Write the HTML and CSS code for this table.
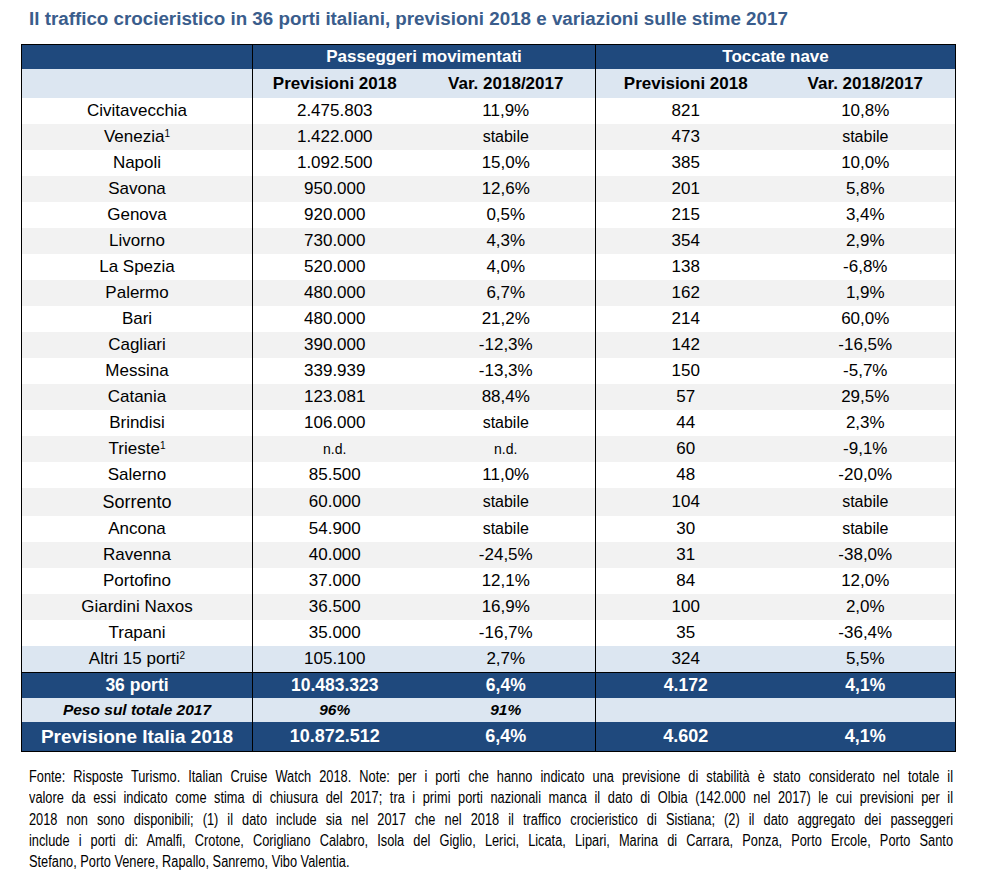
FILE: index.html
```html
<!DOCTYPE html>
<html lang="it">
<head>
<meta charset="utf-8">
<title>Traffico crocieristico</title>
<link rel="stylesheet" href="styles.css">
</head>
<body>
<div class="page">
  <h1 class="title">Il traffico crocieristico in 36 porti italiani, previsioni 2018 e variazioni sulle stime 2017</h1>
  <table class="tbl">
    <colgroup>
      <col class="c-port"><col class="c-p1"><col class="c-p2"><col class="c-t1"><col class="c-t2">
    </colgroup>
    <thead>
      <tr class="h1">
        <th></th>
        <th colspan="2" class="sep">Passeggeri movimentati</th>
        <th colspan="2" class="sep">Toccate nave</th>
      </tr>
      <tr class="h2">
        <th></th>
        <th class="sep">Previsioni 2018</th><th>Var. 2018/2017</th>
        <th class="sep">Previsioni 2018</th><th>Var. 2018/2017</th>
      </tr>
    </thead>
    <tbody>
      <tr><td>Civitavecchia</td><td class="sep">2.475.803</td><td>11,9%</td><td class="sep">821</td><td>10,8%</td></tr>
      <tr class="alt"><td>Venezia<sup>1</sup></td><td class="sep">1.422.000</td><td class="sm">stabile</td><td class="sep">473</td><td class="sm">stabile</td></tr>
      <tr><td>Napoli</td><td class="sep">1.092.500</td><td>15,0%</td><td class="sep">385</td><td>10,0%</td></tr>
      <tr class="alt"><td>Savona</td><td class="sep">950.000</td><td>12,6%</td><td class="sep">201</td><td>5,8%</td></tr>
      <tr><td>Genova</td><td class="sep">920.000</td><td>0,5%</td><td class="sep">215</td><td>3,4%</td></tr>
      <tr class="alt"><td>Livorno</td><td class="sep">730.000</td><td>4,3%</td><td class="sep">354</td><td>2,9%</td></tr>
      <tr><td>La Spezia</td><td class="sep">520.000</td><td>4,0%</td><td class="sep">138</td><td>-6,8%</td></tr>
      <tr class="alt"><td>Palermo</td><td class="sep">480.000</td><td>6,7%</td><td class="sep">162</td><td>1,9%</td></tr>
      <tr><td>Bari</td><td class="sep">480.000</td><td>21,2%</td><td class="sep">214</td><td>60,0%</td></tr>
      <tr class="alt"><td>Cagliari</td><td class="sep">390.000</td><td>-12,3%</td><td class="sep">142</td><td>-16,5%</td></tr>
      <tr><td>Messina</td><td class="sep">339.939</td><td>-13,3%</td><td class="sep">150</td><td>-5,7%</td></tr>
      <tr class="alt"><td>Catania</td><td class="sep">123.081</td><td>88,4%</td><td class="sep">57</td><td>29,5%</td></tr>
      <tr><td>Brindisi</td><td class="sep">106.000</td><td class="sm">stabile</td><td class="sep">44</td><td>2,3%</td></tr>
      <tr class="alt"><td>Trieste<sup>1</sup></td><td class="sep nd">n.d.</td><td class="nd">n.d.</td><td class="sep">60</td><td>-9,1%</td></tr>
      <tr><td>Salerno</td><td class="sep">85.500</td><td>11,0%</td><td class="sep">48</td><td>-20,0%</td></tr>
      <tr class="alt tall"><td class="big">Sorrento</td><td class="sep">60.000</td><td class="sm">stabile</td><td class="sep">104</td><td class="sm">stabile</td></tr>
      <tr class="tall2"><td>Ancona</td><td class="sep">54.900</td><td class="sm">stabile</td><td class="sep">30</td><td class="sm">stabile</td></tr>
      <tr class="alt"><td>Ravenna</td><td class="sep">40.000</td><td>-24,5%</td><td class="sep">31</td><td>-38,0%</td></tr>
      <tr><td>Portofino</td><td class="sep">37.000</td><td>12,1%</td><td class="sep">84</td><td>12,0%</td></tr>
      <tr class="alt"><td>Giardini Naxos</td><td class="sep">36.500</td><td>16,9%</td><td class="sep">100</td><td>2,0%</td></tr>
      <tr><td>Trapani</td><td class="sep">35.000</td><td>-16,7%</td><td class="sep">35</td><td>-36,4%</td></tr>
      <tr class="other"><td>Altri 15 porti<sup>2</sup></td><td class="sep">105.100</td><td>2,7%</td><td class="sep">324</td><td>5,5%</td></tr>
    </tbody>
    <tfoot>
      <tr class="tot"><td>36 porti</td><td class="sep">10.483.323</td><td>6,4%</td><td class="sep">4.172</td><td>4,1%</td></tr>
      <tr class="peso"><td>Peso sul totale 2017</td><td class="sep">96%</td><td>91%</td><td class="sep"></td><td></td></tr>
      <tr class="prev"><td class="lg">Previsione Italia 2018</td><td class="sep">10.872.512</td><td>6,4%</td><td class="sep">4.602</td><td>4,1%</td></tr>
    </tfoot>
  </table>
  <div class="note-wrap">
    <p class="note">
      <span class="ln">Fonte: Risposte Turismo. Italian Cruise Watch 2018. Note: per i porti che hanno indicato una previsione di stabilità è stato considerato nel totale il</span>
      <span class="ln">valore da essi indicato come stima di chiusura del 2017; tra i primi porti nazionali manca il dato di Olbia (142.000 nel 2017) le cui previsioni per il</span>
      <span class="ln">2018 non sono disponibili; (1) il dato include sia nel 2017 che nel 2018 il traffico crocieristico di Sistiana; (2) il dato aggregato dei passeggeri</span>
      <span class="ln">include i porti di: Amalfi, Crotone, Corigliano Calabro, Isola del Giglio, Lerici, Licata, Lipari, Marina di Carrara, Ponza, Porto Ercole, Porto Santo</span>
      <span class="ln last">Stefano, Porto Venere, Rapallo, Sanremo, Vibo Valentia.</span>
    </p>
  </div>
</div>
</body>
</html>
```
FILE: styles.css
```css
html, body {
  margin: 0;
  padding: 0;
  background: #ffffff;
}
body {
  font-family: "Liberation Sans", Arial, sans-serif;
  color: #000;
}
.page {
  width: 983px;
  padding: 7px 0 0 0;
  overflow: hidden;
}
.title {
  margin: 0 0 13px 29px;
  font-size: 18.8px;
  line-height: 24px;
  font-weight: bold;
  color: #3a5d8c;
}
.tbl {
  margin-left: 21px;
  width: 934px;
  border-collapse: collapse;
  border: 1px solid #000;
  table-layout: fixed;
}
.c-port { width: 231px; }
.c-p1 { width: 164px; }
.c-p2 { width: 179px; }
.c-t1 { width: 180px; }
.c-t2 { width: 180px; }
.tbl th, .tbl td {
  padding: 0;
  text-align: center;
  vertical-align: middle;
  font-size: 17px;
  white-space: nowrap;
}
.tbl .sep { border-left: 1px solid #000; }
.h1 th {
  background: #1f497d;
  color: #fff;
  height: 24px;
  font-weight: bold;
}
.h2 th {
  background: #dce6f1;
  color: #000;
  height: 29px;
  font-weight: bold;
}
tbody tr td { height: 26px; background: #fff; }
tbody tr.alt td { background: #f2f2f2; }
tbody tr.tall td { height: 28px; }
tbody tr.other td { background: #dce6f1; }
.tbl td.sm { font-size: 16px; }
.tbl td.nd { font-size: 14px; }
.tbl td.big { font-size: 18px; }
sup {
  font-size: 10px;
  vertical-align: 5px;
  line-height: 0;
}
.tot td {
  border-top: 1px solid #000;
  background: #1f497d;
  color: #fff;
  font-weight: bold;
  height: 25px;
  font-size: 17.5px;
}
.peso td {
  background: #dce6f1;
  font-weight: bold;
  font-style: italic;
  font-size: 15.5px;
  height: 24px;
}
.prev td {
  background: #1f497d;
  color: #fff;
  font-weight: bold;
  font-size: 18px;
  height: 29px;
}
.prev td.lg { font-size: 19px; }
.note-wrap {
  margin: 14px 0 0 29px;
  width: 924px;
  height: 112px;
}
.note {
  margin: 0;
  width: 1155px;
  transform: scaleX(0.8);
  transform-origin: 0 0;
  font-size: 16px;
  line-height: 21.3px;
  color: #000;
}
.ln {
  display: block;
  text-align: justify;
  text-align-last: justify;
}
.ln.last { text-align-last: left; }
```
